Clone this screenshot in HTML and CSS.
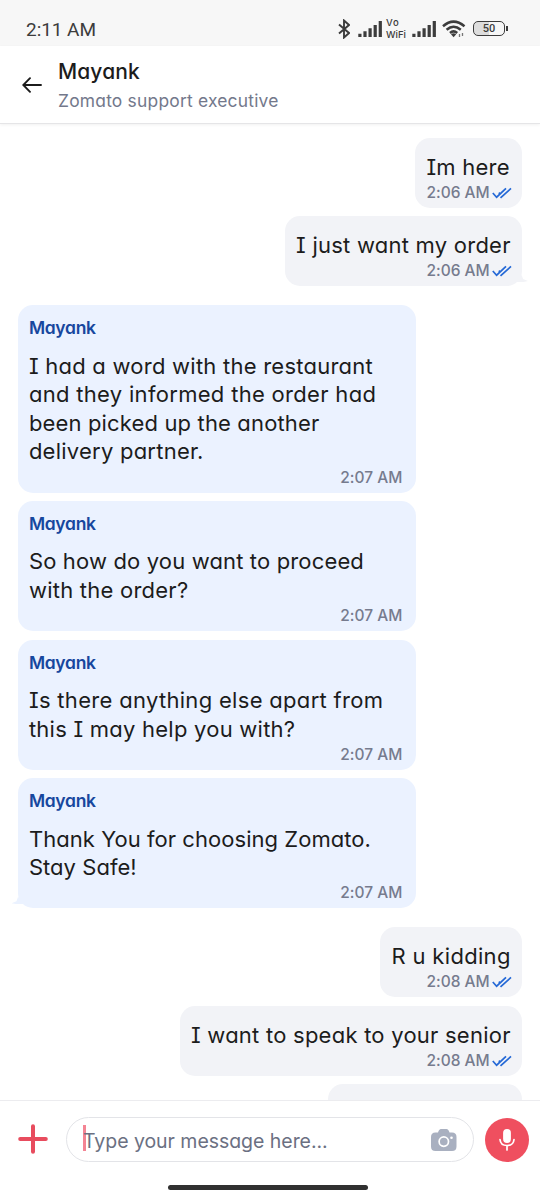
FILE: index.html
```html
<!DOCTYPE html>
<html lang="en">
<head>
<meta charset="utf-8">
<title>Support chat</title>
<link rel="stylesheet" href="styles.css">
</head>
<body>
<svg class="defs" aria-hidden="true">
  <symbol id="ticks" viewBox="0 0 20 12"><path d="M.8 6 4.600 10.200 14 1.400M8.500 10.800 19 1.400M6.800 5.600 8 6.800" fill="none" stroke="#2468d6" stroke-width="1.7"/></symbol>
  <symbol id="signal" viewBox="0 0 25 16"><path d="M.3 12.800h3.200V16H.3zM5.400 10.300h3.200V16H5.400zM10.500 7.300h3.200V16h-3.200zM15.600 4.100h3.200V16h-3.200zM20.700 0H23.900v16h-3.200z" fill="#3c3c3c"/></symbol>
</svg>
<div class="phone">
  <div class="status">
    <span class="clock">2:11 AM</span>
    <div class="indicators">
      <svg class="bt" viewBox="0 0 12 20"><path d="M1 5.5 11 14 6 18.5V1.5L11 6 1 14.5" fill="none" stroke="#3c3c3c" stroke-width="1.9"/></svg>
      <svg class="signal"><use href="#signal"/></svg>
      <span class="vowifi"><span class="vo">Vo</span><span>WiFi</span></span>
      <svg class="signal"><use href="#signal"/></svg>
      <svg class="wifi" viewBox="0 0 24 18"><g fill="none" stroke="#3c3c3c" stroke-width="2.5"><path d="M1 6.2Q11.5-3 22.5 6.2M4.6 9.8Q11.5 3.6 18.8 9.8M8 13Q11.5 9.8 15.2 13"/></g><path d="M9 14.2q2.600-1.800 5.200 0l-2.600 3z" fill="#3c3c3c"/><path d="M17.500 14v3M20.500 13v3" stroke="#777" stroke-width="1.300"/></svg>
      <span class="battery">50</span><span class="battery-tip"></span>
    </div>
  </div>
  <header class="header">
    <svg class="back" viewBox="0 0 20 16"><path d="M19 8H1.500M8 1.200 1.300 8 8 14.800" fill="none" stroke="#1c1c1c" stroke-width="1.900" stroke-linecap="round"/></svg>
    <div>
      <div class="title">Mayank</div>
      <div class="subtitle">Zomato support executive</div>
    </div>
  </header>
  <main class="chat">
    <div class="group">
      <div class="bubble own"><p class="text">Im here</p><div class="time">2:06 AM<svg class="ticks"><use href="#ticks"/></svg></div></div>
      <div class="bubble own tail"><p class="text">I just want my order</p><div class="time">2:06 AM<svg class="ticks"><use href="#ticks"/></svg></div></div>
    </div>
    <div class="group">
      <div class="bubble agent"><div class="name">Mayank</div><p class="text">I had a word with the restaurant<br><span class="wide">and they informed the order had</span><br><span class="snug">been picked up the another</span><br>delivery partner.</p><div class="time">2:07 AM</div></div>
      <div class="bubble agent"><div class="name">Mayank</div><p class="text"><span class="snug">So how do you want to proceed</span><br>with the order?</p><div class="time">2:07 AM</div></div>
      <div class="bubble agent"><div class="name">Mayank</div><p class="text"><span class="wide">Is there anything else apart from</span><br>this I may help you with?</p><div class="time">2:07 AM</div></div>
      <div class="bubble agent tail"><div class="name">Mayank</div><p class="text tight">Thank You for choosing Zomato.<br>Stay Safe!</p><div class="time">2:07 AM</div></div>
    </div>
    <div class="group">
      <div class="bubble own"><p class="text wide">R u kidding</p><div class="time">2:08 AM<svg class="ticks"><use href="#ticks"/></svg></div></div>
      <div class="bubble own"><p class="text">I want to speak to your senior</p><div class="time">2:08 AM<svg class="ticks"><use href="#ticks"/></svg></div></div>
      <div class="bubble own partial"></div>
    </div>
  </main>
  <footer class="footer">
    <div class="composer">
      <svg class="plus" viewBox="0 0 30 30"><path d="M15 2.200v25.600M2.200 15h25.600" stroke="#e84c5e" stroke-width="4" stroke-linecap="round"/></svg>
      <div class="field">
        <span class="caret"></span><span class="placeholder">Type your message here...</span>
        <svg class="camera" viewBox="0 0 26 22"><path d="M4.500 3.500H7Q8 0 10 0h5.500q2 0 3 3.500H21q4.500 0 4.500 4.500v9.500q0 4.500-4.500 4.500H4.500Q0 22 0 17.500V8q0-4.500 4.500-4.500z" fill="#a9b0c0"/><circle cx="12.800" cy="12.600" r="4.700" fill="none" stroke="#fff" stroke-width="1.700"/><circle cx="20.500" cy="8.800" r="1.300" fill="#fff"/></svg>
      </div>
      <div class="mic"><svg viewBox="0 0 16 22"><rect x="4.100" width="7.800" height="14" rx="3.900" fill="#fff"/><path d="M1 10.500Q1.500 16.500 8 16.500T15 10.500M8 16.500V21" fill="none" stroke="#fff" stroke-width="1.700" stroke-linecap="round"/></svg></div>
    </div>
    <div class="home"></div>
  </footer>
</div>
</body>
</html>
```
FILE: styles.css
```css
* { box-sizing: border-box; }
body { margin: 0; background: #fff; font-family: Inter, "Open Sans", sans-serif; font-feature-settings: "cv11", "cv08", "calt" 0; color: #1c1c1c; }
p { margin: 0; }
svg { display: block; flex: none; }
.defs { position: absolute; width: 0; height: 0; }
.phone { width: 540px; height: 1200px; display: flex; flex-direction: column; overflow: hidden; }
.status { height: 46px; flex: none; background: #f7f7f7; display: flex; justify-content: space-between; padding: 12px 32px 0 26px; color: #3c3c3c; }
.clock { font: 400 19px/35px Roboto, sans-serif; letter-spacing: -.05px; }
.indicators { display: flex; align-items: center; height: 33px; }
.bt { width: 12px; height: 20px; margin-right: 8px; }
.signal { width: 25px; height: 16px; margin-top: 1px; }
.vowifi { display: flex; flex-direction: column; width: 22px; margin: 0 4px 0 3px; font: 500 9.500px/11.500px Inter, sans-serif; white-space: nowrap; }
.vo { letter-spacing: .8px; }
.wifi { width: 24px; height: 18px; margin: 0 7px 0 5px; }
.battery { width: 32px; height: 15px; border: 1.5px solid #3c3c3c; border-radius: 5px; background: linear-gradient(90deg, #ddd 50%, #f7f7f7 50%); font: 500 11px/13px Roboto, sans-serif; text-align: center; }
.battery-tip { width: 2px; height: 5px; background: #3c3c3c; margin-left: 1px; }
.header { position: relative; z-index: 1; flex: none; height: 78px; display: flex; padding: 13px 22px 0; gap: 16px; border-bottom: 1px solid #e5e5e7; box-shadow: 0 1px 3px rgba(0,0,0,.06); background: #fff; }
.back { width: 20px; height: 16px; margin-top: 18px; }
.title { font-size: 21px; line-height: 26px; font-weight: 550; letter-spacing: .1px; }
.subtitle { margin-top: 5px; font-size: 17.400px; line-height: 22px; letter-spacing: .22px; color: #73788b; }
.chat { flex: 1; min-height: 0; overflow: hidden; padding: 13.600px 18px 0 17.600px; display: flex; flex-direction: column; gap: 19px; }
.group { display: flex; flex-direction: column; gap: 8.400px; flex: none; }
.bubble { position: relative; border-radius: 15px; padding: 0 11.300px; }
.own { align-self: flex-end; background: #f2f3f7; padding-top: 15px; padding-bottom: 5px; }
.agent { align-self: flex-start; width: 398px; background: #ebf2ff; padding-top: 12px; padding-bottom: 5px; }
.text { font-size: 22px; line-height: 28.600px; letter-spacing: .24px; white-space: nowrap; }
.wide { letter-spacing: .31px; }
.snug { letter-spacing: .15px; }
.tight { letter-spacing: .05px; }
.name { font-size: 17.500px; line-height: 22px; font-weight: 600; letter-spacing: -.3px; color: #17479e; margin-bottom: 12.500px; }
.time { display: flex; align-items: center; justify-content: flex-end; margin-top: 1.500px; font-size: 15.500px; line-height: 20px; font-weight: 500; color: #767b8e; }
.agent .time { padding-right: 2px; }
.ticks { width: 20px; height: 12px; margin: 0 -1px 0 2px; }
.tail::after { content: ""; position: absolute; bottom: 4px; width: 14px; height: 7px; background: inherit; }
.own.tail::after { right: -6px; clip-path: polygon(0 0, 55% 0, 65% 55%, 100% 85%, 60% 100%, 0 100%); }
.agent.tail::after { left: -6px; clip-path: polygon(100% 0, 45% 0, 35% 55%, 0 85%, 40% 100%, 100% 100%); }
.partial { width: 194px; height: 70px; }
.footer { flex: none; height: 100px; border-top: 1px solid #ececef; background: #fff; }
.composer { display: flex; align-items: center; padding: 16px 11px 0 18px; }
.plus { width: 30px; height: 30px; margin-top: -2px; }
.field { width: 408px; height: 45px; margin: 0 11px 0 18px; border: 1px solid #e3e4e8; border-radius: 23px; display: flex; align-items: center; padding: 0 16px; }
.caret { width: 3px; height: 26px; background: #f48493; margin: -3px -3px 0 0; }
.placeholder { flex: 1; font-size: 19.500px; line-height: 26px; letter-spacing: -.04px; color: #6b7082; white-space: nowrap; padding-top: 2px; }
.camera { width: 26px; height: 22px; }
.mic { width: 44px; height: 44px; border-radius: 50%; background: #ef4f5f; display: flex; align-items: center; justify-content: center; }
.mic svg { width: 16px; height: 22px; }
.home { width: 200px; height: 5px; border-radius: 3px; background: #303030; margin: 23px 0 0 168px; }
```
